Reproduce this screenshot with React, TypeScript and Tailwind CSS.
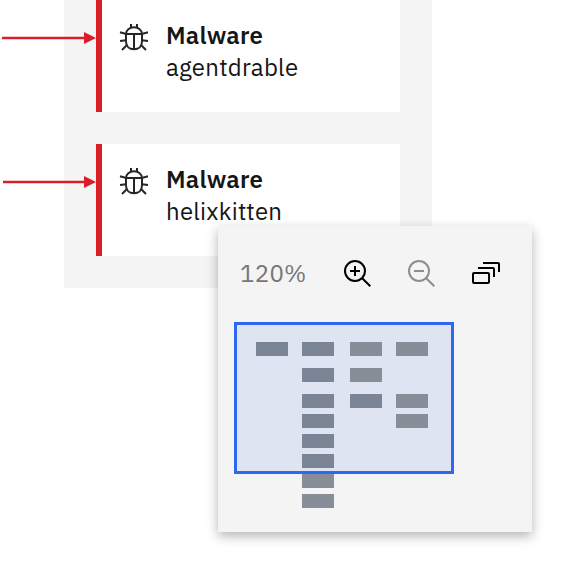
import React from "react";

function BugIcon() {
  return (
    <svg viewBox="0 0 32 32" className="h-8 w-8 shrink-0" fill="none" stroke="#262626" strokeWidth="2">
      <path d="M8 12H24M16 12V27M8 12V19.5C8 24.5 11.5 27.2 16 27.2S24 24.5 24 19.5V12C24 8 20.5 5.3 16 5.3S8 8 8 12Z" />
      <path d="M13 2V6M19 2V6M2 10.2L8.2 12M30 10.2L23.8 12M2 19L8 18.3M30 19L24 18.3M4 28L9.2 22.8M28 28L22.8 22.8" />
    </svg>
  );
}

function Arrow({ start }: { start: number }) {
  return (
    <svg viewBox="0 0 96 12" className="absolute left-0 top-8 h-3 w-24">
      <path d={`M${start} 6H86`} stroke="#da1e28" strokeWidth="2.4" />
      <path d="M84 0L96 6L84 12Z" fill="#da1e28" />
    </svg>
  );
}

function ThreatCard({ name, start }: { name: string; start: number }) {
  return (
    <div className="relative h-28 pl-24">
      <Arrow start={start} />
      <div className="flex h-full w-[304px] gap-4 border-l-[6px] border-[#da1e28] bg-white pl-4 pt-[22px]">
        <BugIcon />
        <div className="-mt-[3px] text-2xl leading-8 tracking-[0.25px] text-[#161616]">
          <div className="w-max font-semibold">Malware</div>
          <div className="w-max">{name}</div>
        </div>
      </div>
    </div>
  );
}

const zoomLens =
  "M21.448 20A10.856 10.856 0 0 0 24 13 11 11 0 1 0 13 24a10.856 10.856 0 0 0 7-2.552L27.586 29 29 27.586ZM13 22a9 9 0 1 1 9-9 9.01 9.01 0 0 1-9 9Z";

function Toolbar() {
  return (
    <div className="flex h-8 items-center gap-8">
      <div className="-mr-[2px] -mt-[2px] ml-[6px] w-[72px] whitespace-nowrap text-2xl leading-8 tracking-[0.3px] text-[#767676]">
        120%
      </div>
      <svg viewBox="0 0 32 32" className="h-8 w-8">
        <path d={zoomLens} />
        <path d="M18 12H14V8H12V12H8V14H12V18H14V14H18Z" />
      </svg>
      <svg viewBox="0 0 32 32" className="h-8 w-8" fill="#8d8d8d">
        <path d={zoomLens} />
        <path d="M8 12H18V14H8Z" />
      </svg>
      <svg viewBox="0 0 32 32" className="h-8 w-8" fill="none" stroke="#000" strokeWidth="2">
        <rect x="3" y="15" width="16" height="10" rx="1" />
        <path d="M8 10H23Q24 10 24 11V19M13 5H28Q29 5 29 6V14" />
      </svg>
    </div>
  );
}

const blue = "bg-[#7c8596]";
const gray = "bg-[#878e97]";
const columns = [
  { pad: "", tiles: [blue] },
  { pad: "pl-[14px]", tiles: [blue, blue, blue, blue, blue, blue, gray, gray] },
  { pad: "pl-4", tiles: [gray, gray, blue] },
  { pad: "pl-[14px]", tiles: [gray, "", gray, gray] },
];

function Minimap() {
  return (
    <div className="relative mt-8 h-[194px]">
      <div className="absolute left-0 top-0 h-[152px] w-[220px] border-[3px] border-[#2f67f3] bg-[#dee4f2]" />
      <div className="relative flex pl-[22px] pt-5">
        {columns.map((column, index) => (
          <div key={index} className={column.pad}>
            {column.tiles.map((color, row) => (
              <div key={row} className={`h-[14px] w-8 ${color} ${row < 2 ? "mb-3" : "mb-[6px]"}`} />
            ))}
          </div>
        ))}
      </div>
    </div>
  );
}

export default function App() {
  return (
    <main className="relative h-[576px] w-[578px] overflow-hidden bg-white font-['IBM_Plex_Sans','Open_Sans',sans-serif]">
      <div className="h-72 bg-[linear-gradient(to_right,transparent_64px,#f4f4f4_64px,#f4f4f4_432px,transparent_432px)]">
        <ThreatCard name="agentdrable" start={2} />
        <div className="h-8" />
        <ThreatCard name="helixkitten" start={3} />
      </div>
      <section className="absolute left-[218px] top-[226px] h-[306px] w-[314px] rounded-t-[2px] bg-[#f4f4f4] px-4 pt-8 shadow-[0_4px_12px_rgba(0,0,0,0.3)]">
        <Toolbar />
        <Minimap />
      </section>
    </main>
  );
}
